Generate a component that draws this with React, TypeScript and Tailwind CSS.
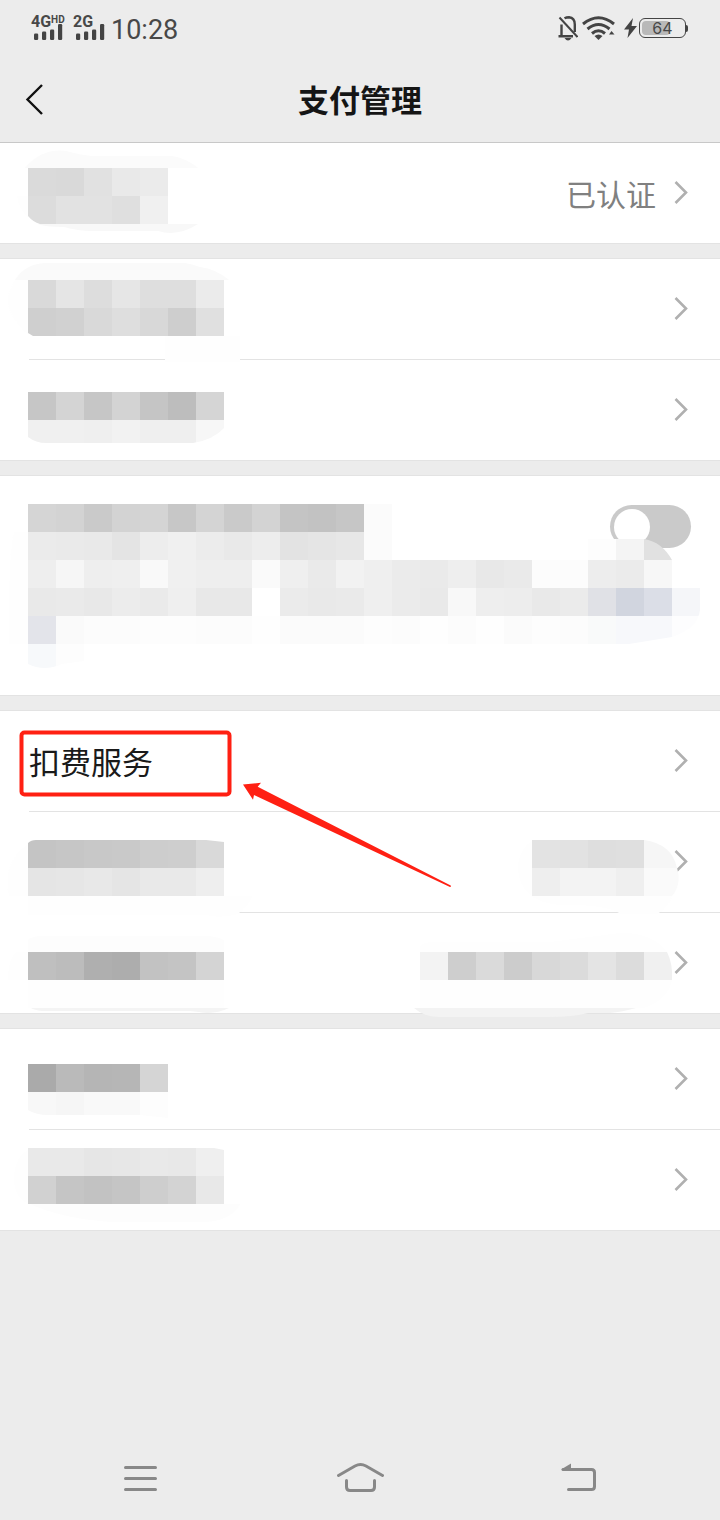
import React from 'react';

type Strip = { row: number; col: number; shades: string };
type Smudge = { d: string; fill: string };
type Cover = { strips: Strip[]; under?: Smudge[]; over?: Smudge[] };

type Item = {
  name: string;
  top: number;
  label?: string;
  value?: string;
  left?: Cover;
  right?: Cover;
  marked?: boolean;
};

const CELL = 28;

// Every block snaps to one 28px grid, so strips are given by grid row and column
const groups: Item[][] = [
  [
    {
      name: '实名认证',
      top: 143,
      value: '已认证',
      left: {
        strips: [
          { row: 6, col: 1, shades: 'dadada d9d9d9 e1e1e1 e9e9e9 ebebeb' },
          { row: 7, col: 1, shades: 'dcdcdc e2e2e2 e2e2e2 dfdfdf f0f0f0' },
        ],
        under: [
          { d: 'M25 168Q42 148 66 151Q80 155 92 156H172Q186 158 198 168Z', fill: '#fbfbfb' },
          { d: 'M38 224Q44 227 64 227Q78 231 92 231H158Q178 237 198 224Z', fill: '#f8f8f8' },
          { d: 'M17 196H28V217Q19 210 17 196Z', fill: '#fefefe' },
        ],
        over: [{ d: 'M28 216Q33 222 40 224H28Z', fill: '#ffffff' }],
      },
    },
  ],
  [
    {
      name: '项目一',
      top: 259,
      left: {
        strips: [
          { row: 10, col: 1, shades: 'd9d9d9 e5e5e5 dddddd e6e6e6 dedede dedede ebebeb' },
          { row: 11, col: 1, shades: 'cfcfcf d1d1d1 d9d9d9 dedede d8d8d8 cecece e0e0e0' },
        ],
        under: [
          { d: 'M15 280Q25 264 45 263H185Q192 264 200 267Q216 269 229 280Z', fill: '#fafafa' },
          { d: 'M15 280H28V334Q6 314 8 296Z', fill: '#fefefe' },
          { d: 'M165 336H240V362H165Z', fill: '#fefefe' },
        ],
        over: [{ d: 'M28 333L33 336H28Z', fill: '#ffffff' }],
      },
    },
    {
      name: '项目二',
      top: 360,
      left: {
        strips: [
          { row: 14, col: 1, shades: 'c6c6c6 d4d4d4 c6c6c6 d3d3d3 c5c5c5 bdbdbd d5d5d5' },
          { row: 15, col: 1, shades: 'f0f0f0 f0f0f0 efefef f2f2f2 efefef efefef f7f7f7' },
        ],
        over: [{ d: 'M28 437Q36 443 46 443H193Q213 440 224 428V449H28Z', fill: '#ffffff' }],
      },
    },
  ],
];

const deductions: Item[] = [
  { name: '扣费服务', top: 711, label: '扣费服务', marked: true },
  {
    name: '项目三',
    top: 812,
    left: {
      strips: [
        { row: 30, col: 1, shades: 'c4c4c4 c6c6c6 c8c8c8 c9c9c9 cdcdcd cecece d9d9d9' },
        { row: 31, col: 1, shades: 'e5e5e5 e6e6e6 e8e8e8 e5e5e5 e9e9e9 e9e9e9 eeeeee' },
      ],
      under: [
        { d: 'M28 845V896H9Q2 862 28 845Z', fill: '#fefefe' },
        { d: 'M28 896H252Q248 905 238 914Q220 919 206 915H28Z', fill: '#fefefe' },
      ],
      over: [
        { d: 'M28 840H36Q31 840 28 843Z', fill: '#ffffff' },
        { d: 'M206 840H224V842Z', fill: '#ffffff' },
      ],
    },
    right: {
      strips: [
        { row: 30, col: 19, shades: 'e3e3e3 e2e2e2 dedede dfdfdf' },
        { row: 31, col: 19, shades: 'eeeeee f3f3f3 f3f3f3 efefef' },
      ],
      under: [
        { d: 'M532 841V896Q518 886 518 866Q520 848 532 841Z', fill: '#fefefe' },
        { d: 'M644 840Q672 844 677 868H644Z', fill: '#f6f6f6' },
        { d: 'M644 868H677Q682 884 672 896H644Z', fill: '#fafafa' },
        { d: 'M532 896H672Q668 908 657 914H621Q606 904 560 905Q540 903 532 896Z', fill: '#fefefe' },
      ],
    },
  },
  {
    name: '项目四',
    top: 913,
    left: {
      strips: [{ row: 34, col: 1, shades: 'bfbfbf bcbcbc afafaf adadad c2c2c2 c4c4c4 d4d4d4' }],
      under: [
        { d: 'M28 952V940Q32 936 42 936H205Q216 936 224 940V952Z', fill: '#fdfdfd' },
        { d: 'M8 980Q8 960 16 952H28V980Z', fill: '#fefefe' },
        { d: 'M28 980H224V1008H28Z', fill: '#fefefe' },
        { d: 'M31 1008H229Q214 1015 199 1012L190 1011H42Q34 1010 31 1008Z', fill: '#f4f4f4' },
      ],
    },
    right: {
      strips: [{ row: 34, col: 15, shades: 'f3f3f3 cecece dadada cccccc d8d8d8 dbdbdb e4e4e4 dcdcdc' }],
      under: [
        { d: 'M420 952V946Q426 941 440 942H550L620 933Q652 932 667 952Z', fill: '#fefefe' },
        { d: 'M644 952H667Q673 964 672 980H644Z', fill: '#f0f0f0' },
        { d: 'M420 980H672Q668 1000 644 1008H420Z', fill: '#fefefe' },
        { d: 'M414 1008H636Q622 1012 610 1013L588 1013Q574 1017 548 1017H440Q424 1017 414 1008Z', fill: '#f3f3f3' },
      ],
    },
  },
];

const others: Item[] = [
  {
    name: '项目五',
    top: 1029,
    left: {
      strips: [
        { row: 38, col: 1, shades: 'aaaaaa bababa b5b5b5 b6b6b6 d5d5d5' },
        { row: 39, col: 1, shades: 'f8f8f8 f6f6f6 f9f9f9 f9f9f9 fdfdfd' },
      ],
      over: [{ d: 'M28 1110Q36 1115 48 1115H140L168 1118V1121H28Z', fill: '#ffffff' }],
    },
  },
  {
    name: '项目六',
    top: 1130,
    left: {
      strips: [
        { row: 41, col: 1, shades: 'e9e9e9 e9e9e9 e6e6e6 e7e7e7 e9e9e9 e8e8e8 efefef' },
        { row: 42, col: 1, shades: 'd1d1d1 c5c5c5 c2c2c2 c5c5c5 cecece d3d3d3 e8e8e8' },
      ],
      under: [
        { d: 'M28 1150V1204Q13 1196 14 1176Q16 1156 28 1150Z', fill: '#fefefe' },
        { d: 'M30 1204H240Q232 1220 206 1222H110Q60 1218 30 1204Z', fill: '#fdfdfd' },
      ],
      over: [{ d: 'M214 1148H224V1150Z', fill: '#ffffff' }],
    },
  },
];

const notice: Cover = {
  strips: [
    { row: 18, col: 1, shades: 'd5d5d5 d3d3d3 cacaca d3d3d3 d4d4d4 c7c7c7 d4d4d4 cacaca d3d3d3 c4c4c4 c2c2c2 c6c6c6 fbfbfb' },
    { row: 19, col: 1, shades: 'ebebeb eaeaea e9e9e9 e4e4e4 ededed f0f0f0 ececec e9e9e9 ededed e3e3e3 e5e5e5 e7e7e7 fbfbfb' },
    { row: 20, col: 1, shades: 'eeeeee f6f6f6 eeeeee efefef f9f9f9 f0f0f0 eeeeee eeeeee fafafa efefef eaeaea f2f2f2 efefef ebebeb eaeaea eeeeee e8e8e8 eaeaea fcfcfc fcfcfc ededed ebebeb f7f7f7' },
    { row: 21, col: 1, shades: 'e9e9e9 eaeaea e8e8e8 ececec eaeaea efefef e8e8e8 e8e8e8 ffffff ebebeb e9e9e9 eaeaea efefef ebebeb e9e9e9 f8f8f8 eeeeee ededed e9e9e9 ebebeb e0e1e6 d1d5df dbdee7 f5f6f9' },
    { row: 22, col: 1, shades: 'e3e4ea fafafa fcfcfc fcfcfc fdfdfd fdfdfd fcfcfc fcfcfc fefefe fbfbfb fbfbfb fbfbfb fdfdfd fcfcfc fefefe fcfcfc fefefe fbfbfb fdfdfd fcfcfc f9fafa f7f8fb f7f8fb fdfdfe' },
    { row: 23, col: 1, shades: 'f7f9fb fdfdfd' },
  ],
  under: [
    { d: 'M588 539H616V560H588Z', fill: '#fdfdfd' },
    { d: 'M616 539H644V560H616Z', fill: '#f4f4f4' },
    { d: 'M644 539Q662 542 672 560H644Z', fill: '#e1e1e1' },
    { d: 'M28 532V644H9Q8 560 14 532Z', fill: '#fefefe' },
  ],
  over: [
    { d: 'M28 664Q44 672 62 664L84 661V672H28Z', fill: '#ffffff' },
    { d: 'M629 644L672 637Q698 628 700 610V644Z', fill: '#ffffff' },
  ],
};

const Mosaic: React.FC<{ cover: Cover; viewBox: string; className: string }> = ({ cover, viewBox, className }) => (
  <svg viewBox={viewBox} className={className} aria-hidden="true">
    {cover.under?.map((s) => <path key={s.d} d={s.d} fill={s.fill} />)}
    {cover.strips.map((strip) =>
      strip.shades.split(' ').map((shade, i) => (
        <rect
          key={`${strip.row}-${i}`}
          x={(strip.col + i) * CELL}
          y={strip.row * CELL}
          width={CELL}
          height={CELL}
          fill={`#${shade}`}
        />
      ))
    )}
    {cover.over?.map((s) => <path key={s.d} d={s.d} fill={s.fill} />)}
  </svg>
);

const Chevron: React.FC = () => (
  <svg viewBox="0 0 14 24" className="h-6 w-[14px] shrink-0" fill="none" stroke="#b0b0b0" strokeWidth="2.6" aria-hidden="true">
    <path d="M1.500 1L12 11.500L1.500 22" />
  </svg>
);

const Signal: React.FC<{ name: string; badge?: string }> = ({ name, badge }) => (
  <div className="flex w-[34px] flex-col">
    <div className="flex h-3 items-start font-bold">
      <span className="text-base leading-3">{name}</span>
      {badge && <span className="text-[10px] leading-2">{badge}</span>}
    </div>
    <svg viewBox="0 0 34 17" className="-mt-1 h-[17px] w-[34px]" fill="#444444" aria-hidden="true">
      <rect x="3" y="9.500" width="4.200" height="6.500" rx="1.200" />
      <rect x="11" y="7.500" width="4.200" height="8.500" rx="1.200" />
      <rect x="19" y="5.500" width="4.200" height="10.500" rx="1.200" />
      <rect x="27" y="0" width="4.200" height="16" rx="1.200" />
    </svg>
  </div>
);

const StatusBar: React.FC = () => (
  <div className="flex h-14 items-center justify-between pr-[34px] pl-[31px] font-[Roboto,sans-serif] text-[#484848]">
    <div className="flex items-center gap-2">
      <Signal name="4G" badge="HD" />
      <Signal name="2G" />
      <span className="-ml-1 pt-1 text-[27px] leading-7">10:28</span>
    </div>
    <div className="flex items-center gap-2">
      <svg viewBox="0 0 20 26" className="-mr-1 h-[26px] w-5" fill="none" stroke="#444444" strokeWidth="2.4" aria-hidden="true">
        <path d="M3.500 21V9.500M6.500 3.300Q8.500 2.200 11 2.200Q16.800 2.700 16.800 9.500V17M0.500 21.200H15" />
        <path d="M1.500 2.500L19.500 22" strokeWidth="2" />
        <path d="M6.500 23H13.500Q10 28 6.500 23Z" fill="#444444" stroke="none" />
      </svg>
      <svg viewBox="0 0 34 24" className="h-6 w-[34px]" fill="none" stroke="#444444" strokeWidth="3" aria-hidden="true">
        <path d="M1 8Q16.500 -4.500 32 8M5.500 13Q16.500 4 27.500 13M10 17.500Q16.500 12 23 17.500" />
        <path d="M12.500 20Q16.500 17 20.500 20L16.500 24Z" fill="#444444" stroke="none" />
        <path d="M27 18.500L29.500 15L32.500 18.500Z" fill="#444444" stroke="none" />
      </svg>
      <div className="flex items-center gap-[2px]">
        <svg viewBox="0 0 13 20" className="h-5 w-[13px]" fill="#444444" aria-hidden="true">
          <path d="M9 0L0 11.500H5L3.500 20L13 8H7.500Z" />
        </svg>
        <div className="relative flex h-5 w-[47px] items-center justify-center rounded-md border border-[#444444]">
          <span className="absolute top-[2px] bottom-[2px] left-[2px] w-7 rounded-sm bg-[#b9b9b9]" />
          <span className="absolute top-[6px] -right-[3px] h-[7px] w-[2px] rounded-r bg-[#444444]" />
          <span className="relative font-[Inter,sans-serif] text-base leading-none">64</span>
        </div>
      </div>
    </div>
  </div>
);

const Header: React.FC = () => (
  <header className="grid h-[87px] grid-cols-[1fr_auto_1fr] items-center border-b border-[#c8c8c8]">
    <button type="button" aria-label="返回" className="justify-self-start py-3 pr-4 pl-6">
      <svg viewBox="0 0 20 32" className="h-8 w-5" fill="none" stroke="#111111" strokeWidth="2.4" aria-hidden="true">
        <path d="M18 2L3.500 16.500L18 31" />
      </svg>
    </button>
    <h1 className="text-[31px] leading-10 font-bold text-[#151515]">支付管理</h1>
  </header>
);

const Highlight: React.FC = () => (
  <svg viewBox="0 711 480 200" className="pointer-events-none absolute top-0 left-0 z-20 h-[200px] w-[480px]" aria-hidden="true">
    <rect x="21.500" y="732.500" width="208" height="62" rx="3" fill="none" stroke="#ff2013" strokeWidth="4" />
    <path d="M243 784.500L261 782.700L257.700 786.700L450.700 885.500Q451.500 887 450 887L254 795L253 799.700Z" fill="#ff2013" />
  </svg>
);

const Row: React.FC<{ item: Item; last: boolean }> = ({ item, last }) => (
  <li className="relative">
    <a
      href="#"
      aria-label={item.name}
      className={`ml-[29px] flex items-center justify-between pr-8 ${last ? 'h-[100px]' : 'h-[101px] border-b border-[#e3e3e3]'}`}
    >
      <span className="text-[31px] leading-10 text-[#1a1a1a]">{item.label}</span>
      <span className="flex items-center gap-[18px] text-[30px] leading-10 text-[#808080]">
        {item.value}
        <Chevron />
      </span>
    </a>
    {item.left && (
      <Mosaic
        cover={item.left}
        viewBox={`0 ${item.top} 360 100`}
        className="pointer-events-none absolute top-0 left-0 z-10 h-[100px] w-[360px] overflow-visible"
      />
    )}
    {item.right && (
      <Mosaic
        cover={item.right}
        viewBox={`360 ${item.top} 360 100`}
        className="pointer-events-none absolute top-0 right-0 z-10 h-[100px] w-[360px] overflow-visible"
      />
    )}
    {item.marked && <Highlight />}
  </li>
);

const Group: React.FC<{ items: Item[]; first?: boolean }> = ({ items, first }) => (
  <ul className={`border-[#e3e3e3] bg-white ${first ? 'border-b' : 'border-y'}`}>
    {items.map((item, i) => (
      <Row key={item.name} item={item} last={i === items.length - 1} />
    ))}
  </ul>
);

const NavBar: React.FC = () => (
  <nav className="mt-auto grid h-[84px] grid-cols-3 items-center justify-items-center px-[30px]">
    <button type="button" aria-label="菜单">
      <svg viewBox="0 0 48 32" className="h-8 w-12" fill="none" stroke="#888888" strokeWidth="3" strokeLinecap="round" aria-hidden="true">
        <path d="M9.500 5.500H39.500M9.500 16.500H39.500M9.500 27.500H39.500" />
      </svg>
    </button>
    <button type="button" aria-label="主页">
      <svg viewBox="0 0 48 32" className="h-8 w-12" fill="none" stroke="#888888" strokeWidth="3" strokeLinecap="round" aria-hidden="true">
        <path d="M2.500 13.500L19 4Q24.500 1 30 4L46.500 13.500" />
        <path d="M10.500 18.500V25Q10.500 28.500 14 28.500H35Q38.500 28.500 38.500 25V18.500" />
      </svg>
    </button>
    <button type="button" aria-label="后退">
      <svg viewBox="0 0 48 32" className="h-8 w-12" fill="none" stroke="#888888" strokeWidth="3" strokeLinecap="round" aria-hidden="true">
        <path d="M7 7.500H35.500Q38.500 7.500 38.500 10.500V24.500Q38.500 27.500 35.500 27.500H12.500" />
        <path d="M5 7.500L15 1.500V8Z" fill="#888888" stroke="none" />
      </svg>
    </button>
  </nav>
);

const App: React.FC = () => {
  return (
    <div className="flex min-h-screen flex-col bg-[#ececec] font-['Noto_Sans_CJK_SC',sans-serif]">
      <StatusBar />
      <Header />
      <main className="flex flex-col gap-[14px]">
        {groups.map((items, i) => (
          <Group key={items[0].name} items={items} first={i === 0} />
        ))}
        <section className="relative flex min-h-[221px] items-start justify-end border-y border-[#e3e3e3] bg-white pt-[29px] pr-[29px]">
          <input
            type="checkbox"
            role="switch"
            aria-label="开关"
            className="h-[43px] w-[81px] appearance-none rounded-full bg-[#cacaca] p-1 before:block before:size-9 before:rounded-full before:bg-white checked:bg-green-500 checked:before:ml-auto"
          />
          <Mosaic
            cover={notice}
            viewBox="0 476 720 219"
            className="pointer-events-none absolute top-0 left-0 h-[219px] w-[720px]"
          />
        </section>
        <Group items={deductions} />
        <Group items={others} />
      </main>
      <NavBar />
    </div>
  );
};

export default App;
